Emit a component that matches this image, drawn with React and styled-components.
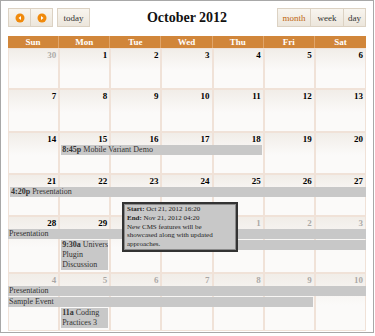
import React from "react";
import styled, { createGlobalStyle } from "styled-components";

const GlobalStyle = createGlobalStyle`
	body {
		margin: 0;
		background: #fff;
		font-family: "Liberation Serif", "Times New Roman", serif;
	}
`;

const Frame = styled.div`
	position: relative;
	box-sizing: border-box;
	width: 374px;
	height: 333px;
	border: 1px solid #a8a8a8;
	padding: 7px;
`;

const Toolbar = styled.div`
	display: grid;
	grid-template-columns: 1fr auto 1fr;
	align-items: center;
	height: 19px;
	margin-bottom: 9px;
`;

const Group = styled.div`
	display: flex;
	gap: ${(p) => p.$gap || 0}px;
	justify-self: ${(p) => (p.$right ? "end" : "start")};
`;

const Joined = styled.div`
	display: flex;
`;

const Button = styled.button`
	box-sizing: border-box;
	display: flex;
	align-items: center;
	justify-content: center;
	width: ${(p) => p.$w}px;
	height: 19px;
	margin: 0 0 0 -1px;
	padding: 0;
	border: 1px solid #dcd2c3;
	background: linear-gradient(#f8f5ef, #ece6dc);
	font-family: inherit;
	font-size: 9px;
	color: ${(p) => (p.$active ? "#c0650d" : "#333")};

	&:first-child {
		margin-left: 0;
	}
`;

const Title = styled.h2`
	margin: 0;
	font-size: 14px;
	font-weight: bold;
	color: #111;
`;

const Calendar = styled.div`
	width: 358px;
`;

const HeadRow = styled.div`
	display: grid;
	grid-template-columns: repeat(7, 1fr);
	background: #d1863a;
`;

const HeadCell = styled.div`
	height: 12px;
	line-height: 12px;
	text-align: center;
	font-size: 9px;
	font-weight: bold;
	color: #fff;
	border-right: 1px solid #e0a56a;

	&:last-child {
		border-right: none;
	}
`;

const Week = styled.div`
	display: grid;
	grid-template-columns: repeat(7, 1fr);
	grid-template-rows: 13px repeat(${(p) => p.$lanes}, auto) minmax(2px, 1fr);
	min-height: ${(p) => p.$minH}px;
`;

const Cell = styled.div`
	grid-column: ${(p) => p.$col};
	grid-row: 1 / -1;
	border: 1px solid #f0e2d8;
	background: linear-gradient(#f1ede8, #fbfaf9 55%);
`;

const DayNum = styled.div`
	padding: 1px 2px 0 0;
	text-align: right;
	font-size: 9px;
	line-height: 11px;
	font-weight: bold;
	color: #000;
	opacity: ${(p) => (p.$other ? 0.3 : 1)};
`;

const Event = styled.div`
	grid-column: ${(p) => p.$start} / ${(p) => p.$end};
	grid-row: ${(p) => p.$lane + 1};
	align-self: start;
	z-index: 1;
	margin: 0 ${(p) => (p.$openEnd ? 0 : 2)}px 1px ${(p) => (p.$openStart ? 0 : 2)}px;
	padding: 0 1px;
	background: #c8c8c8;
	color: #333;
	font-size: 8px;
	line-height: 10px;
	overflow: hidden;

	b {
		font-weight: bold;
	}
`;

const Tooltip = styled.div`
	position: absolute;
	left: 121px;
	top: 201px;
	box-sizing: border-box;
	width: 116px;
	padding: 1px 8px 1px 3px;
	border: 2px solid #333;
	box-shadow: inset 0 0 0 1px #8a8a8a;
	background: #c8c8c8;
	color: #222;
	font-size: 7px;
	line-height: 8.8px;
	z-index: 5;
`;

const Arrow = ({ dir }) => (
	<svg width="10" height="10" viewBox="0 0 10 10">
		<circle cx="5" cy="5" r="4.5" fill="#f08a0c" />
		{dir === "left" ? (
			<polygon points="6,3 3.5,5 6,7" fill="#fff" />
		) : (
			<polygon points="4,3 6.5,5 4,7" fill="#fff" />
		)}
	</svg>
);

const days = ["Sun", "Mon", "Tue", "Wed", "Thu", "Fri", "Sat"];

const weeks = [
	{ nums: [30, 1, 2, 3, 4, 5, 6], other: (i) => i === 0, minH: 41, lanes: 0, events: [] },
	{ nums: [7, 8, 9, 10, 11, 12, 13], other: () => false, minH: 43, lanes: 0, events: [] },
	{
		nums: [14, 15, 16, 17, 18, 19, 20],
		other: () => false,
		minH: 42,
		lanes: 1,
		events: [{ start: 2, end: 6, lane: 1, time: "8:45p", title: "Mobile Variant Demo" }],
	},
	{
		nums: [21, 22, 23, 24, 25, 26, 27],
		other: () => false,
		minH: 42,
		lanes: 1,
		events: [{ start: 1, end: 8, lane: 1, time: "4:20p", title: "Presentation", openEnd: true }],
	},
	{
		nums: [28, 29, 30, 31, 1, 2, 3],
		other: (i) => i > 3,
		minH: 0,
		lanes: 2,
		events: [
			{ start: 1, end: 8, lane: 1, title: "Presentation", openStart: true, openEnd: true },
			{ start: 2, end: 3, lane: 2, time: "9:30a", title: "Univers Plugin Discussion" },
			{ start: 4, end: 8, lane: 2, title: "Sample Event", openEnd: true },
		],
	},
	{
		nums: [4, 5, 6, 7, 8, 9, 10],
		other: () => true,
		minH: 0,
		lanes: 3,
		events: [
			{ start: 1, end: 8, lane: 1, title: "Presentation", openStart: true, openEnd: true },
			{ start: 1, end: 7, lane: 2, title: "Sample Event", openStart: true },
			{ start: 2, end: 3, lane: 3, time: "11a", title: "Coding Practices 3" },
		],
	},
];

const App = () => (
	<>
		<GlobalStyle />
		<Frame>
			<Toolbar>
				<Group $gap={5}>
					<Joined>
						<Button $w={23}>
							<Arrow dir="left" />
						</Button>
						<Button $w={23}>
							<Arrow dir="right" />
						</Button>
					</Joined>
					<Button $w={33}>today</Button>
				</Group>
				<Title>October 2012</Title>
				<Group $right>
					<Joined>
						<Button $w={34} $active>
							month
						</Button>
						<Button $w={34}>week</Button>
						<Button $w={23}>day</Button>
					</Joined>
				</Group>
			</Toolbar>
			<Calendar>
				<HeadRow>
					{days.map((d) => (
						<HeadCell key={d}>{d}</HeadCell>
					))}
				</HeadRow>
				{weeks.map((w, wi) => (
					<Week key={wi} $lanes={w.lanes} $minH={w.minH}>
						{w.nums.map((n, i) => (
							<Cell key={i} $col={i + 1}>
								<DayNum $other={w.other(i)}>{n}</DayNum>
							</Cell>
						))}
						{w.events.map((e, ei) => (
							<Event
								key={ei}
								$start={e.start}
								$end={e.end}
								$lane={e.lane}
								$openStart={e.openStart}
								$openEnd={e.openEnd}
							>
								{e.time && <b>{e.time}</b>}
								{e.time ? "\u00a0" : ""}
								{e.title}
							</Event>
						))}
					</Week>
				))}
			</Calendar>
			<Tooltip>
				<b>Start:</b> Oct 21, 2012 16:20
				<br />
				<b>End:</b> Nov 21, 2012 04:20
				<br />
				New CMS features will be showcased along with updated approaches.
			</Tooltip>
		</Frame>
	</>
);

export default App;
